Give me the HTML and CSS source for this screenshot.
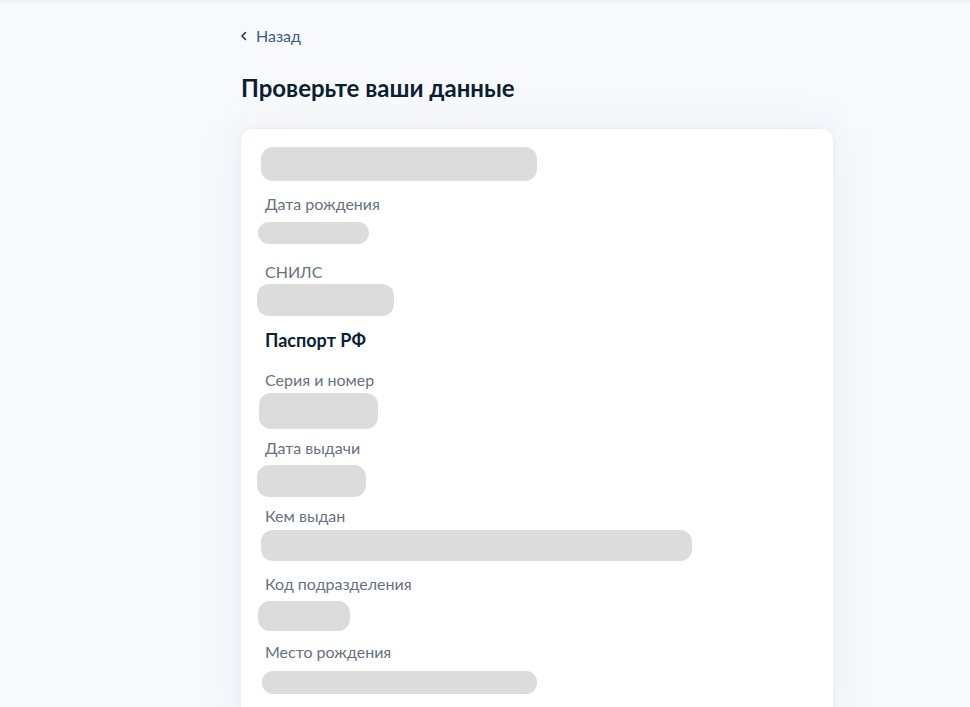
FILE: index.html
```html
<!DOCTYPE html>
<html lang="ru">
<head>
<meta charset="utf-8">
<title>Проверьте ваши данные</title>
<link rel="stylesheet" href="styles.css">
</head>
<body>
<div class="topline"></div>
<main class="layout">
  <a class="back" href="#">
    <svg class="back-icon" width="8" height="10" viewBox="0 0 8 10" aria-hidden="true"><path d="M5.5 1.5 L2 5 L5.5 8.5" fill="none" stroke="#1f3a5f" stroke-width="1.6" stroke-linecap="round" stroke-linejoin="round"/></svg>
    <span>Назад</span>
  </a>
  <h1 class="title">Проверьте ваши данные</h1>
  <section class="card">
    <div class="name-row"><div class="bar bar-name"></div></div>

    <div class="field">
      <div class="label">Дата рождения</div>
      <div class="value"><div class="bar bar-birth"></div></div>
    </div>
    <div class="field">
      <div class="label">СНИЛС</div>
      <div class="value"><div class="bar bar-snils"></div></div>
    </div>

    <h2 class="section-title">Паспорт РФ</h2>

    <div class="field">
      <div class="label">Серия и номер</div>
      <div class="value"><div class="bar bar-series"></div></div>
    </div>
    <div class="field">
      <div class="label">Дата выдачи</div>
      <div class="value"><div class="bar bar-issued"></div></div>
    </div>
    <div class="field">
      <div class="label">Кем выдан</div>
      <div class="value"><div class="bar bar-by"></div></div>
    </div>
    <div class="field">
      <div class="label">Код подразделения</div>
      <div class="value"><div class="bar bar-code"></div></div>
    </div>
    <div class="field">
      <div class="label">Место рождения</div>
      <div class="value"><div class="bar bar-place"></div></div>
    </div>
  </section>
</main>
</body>
</html>
```

FILE: styles.css
```css
* { box-sizing: border-box; }
html, body { margin: 0; padding: 0; }
body {
  background: #f8f9fc;
  font-family: Lato, "Noto Sans", "Liberation Sans", sans-serif;
  color: #0b1f33;
  overflow: hidden;
  height: 707px;
}
.topline {
  height: 3px;
  background: #f0f1f4;
}
.layout {
  padding: 0 137px 0 241px;
}
.back {
  display: flex;
  align-items: center;
  gap: 8px;
  margin-top: 23px;
  height: 20px;
  color: #3b5b8a;
  font-size: 16px;
  line-height: 20px;
  text-decoration: none;
}
.back-icon { display: block; margin-left: -1px; }
.title {
  margin: 27px 0 0;
  font-size: 24px;
  line-height: 30px;
  font-weight: 700;
  color: #0b1f33;
}
.card {
  margin-top: 26px;
  background: #fff;
  border-radius: 12px;
  box-shadow: 0 4px 40px rgba(170, 185, 215, 0.18), 0 0 4px rgba(200, 210, 230, 0.25);
  padding: 18px 24px 20px;
  min-height: 600px;
}
.name-row { height: 45px; }
.bar {
  background: #dcdcdc;
  border-radius: 12px;
}
.bar-name { width: 276px; height: 34px; margin-left: -4px; }
.field { height: 68px; }
.label {
  font-size: 16px;
  line-height: 24px;
  color: #66727f;
}
.value { height: 44px; }
.bar-birth  { width: 111px; height: 22px; margin: 6px 0 0 -7px; border-radius: 11px; }
.bar-snils  { width: 137px; height: 32px; margin: 0 0 0 -8px; }
.bar-series { width: 119px; height: 36px; margin: 1px 0 0 -6px; }
.bar-issued { width: 109px; height: 32px; margin: 5px 0 0 -8px; }
.bar-by     { width: 431px; height: 31px; margin: 2px 0 0 -4px; }
.bar-code   { width: 92px;  height: 30px; margin: 5px 0 0 -7px; }
.bar-place  { width: 275px; height: 23px; margin: 7px 0 0 -3px; border-radius: 11px; }
.section-title {
  margin: 0 0 16px;
  font-size: 18px;
  line-height: 24px;
  font-weight: 700;
  color: #0b1f33;
}
```
